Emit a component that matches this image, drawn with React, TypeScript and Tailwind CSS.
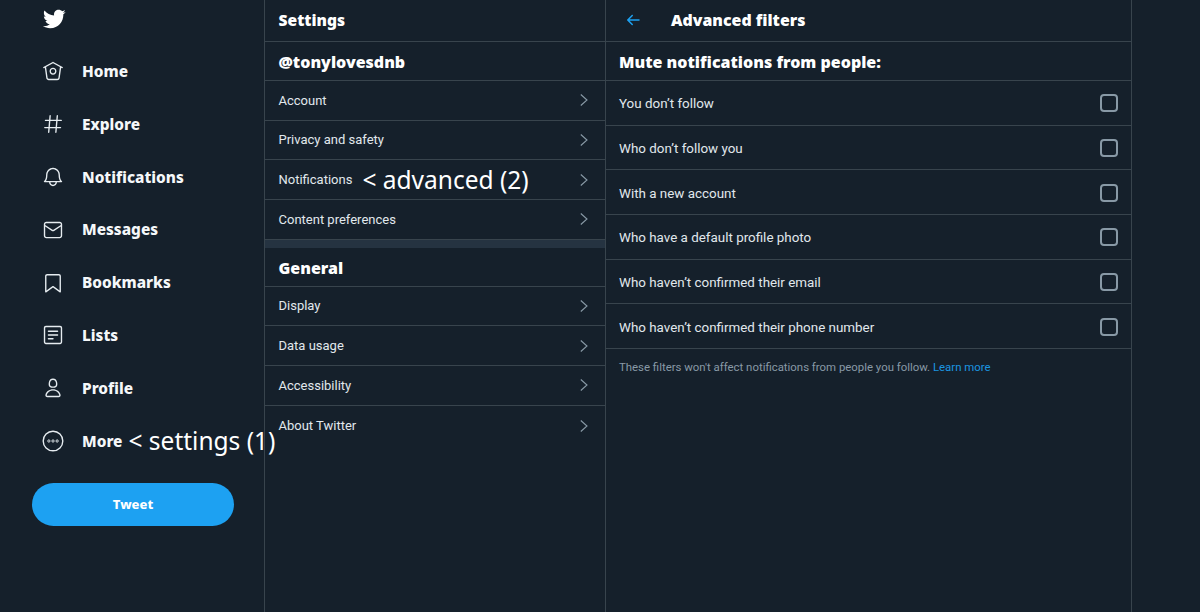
import React from 'react';

const BIRD = 'M23.643 4.937c-.835.37-1.732.62-2.675.733.962-.576 1.7-1.49 2.048-2.578-.9.534-1.897.922-2.958 1.13-.85-.904-2.06-1.47-3.4-1.47-2.572 0-4.658 2.086-4.658 4.66 0 .364.042.718.12 1.06-3.873-.195-7.304-2.05-9.602-4.868-.4.69-.63 1.49-.63 2.342 0 1.616.823 3.043 2.072 3.878-.764-.025-1.482-.234-2.11-.583v.06c0 2.257 1.605 4.14 3.737 4.568-.392.106-.803.162-1.227.162-.3 0-.593-.028-.877-.082.593 1.85 2.313 3.198 4.352 3.234-1.595 1.25-3.604 1.995-5.786 1.995-.376 0-.747-.022-1.112-.065 2.062 1.323 4.51 2.093 7.14 2.093 8.57 0 13.255-7.098 13.255-13.254 0-.2-.005-.402-.014-.602.91-.658 1.7-1.477 2.323-2.41z';

const NAV_ICONS: { [key: string]: React.ReactNode } = {
  Home: (
    <>
      <path d="M22.46 7.57L12.357 2.115c-.223-.12-.49-.12-.713 0L1.543 7.57c-.364.197-.5.652-.303 1.017.135.25.394.393.66.393.12 0 .243-.03.356-.09l.815-.44L4.7 19.963c.214 1.215 1.308 2.062 2.658 2.062h9.282c1.352 0 2.445-.848 2.663-2.087l1.626-11.49.818.442c.364.193.82.06 1.017-.304.196-.363.06-.818-.304-1.015zm-4.638 12.133c-.107.606-.703.822-1.18.822H7.36c-.48 0-1.075-.216-1.178-.798L4.48 7.69 12 3.628l7.522 4.06-1.7 12.015z" />
      <path d="M8.22 12.184c0 2.084 1.695 3.78 3.78 3.78s3.78-1.696 3.78-3.78-1.695-3.78-3.78-3.78-3.78 1.696-3.78 3.78zm6.06 0c0 1.258-1.022 2.28-2.28 2.28s-2.28-1.022-2.28-2.28 1.022-2.28 2.28-2.28 2.28 1.022 2.28 2.28z" />
    </>
  ),
  Explore: (
    <path d="M21 7.337h-3.93l.372-4.272c.036-.412-.27-.775-.682-.812-.417-.03-.776.27-.812.683l-.383 4.4h-6.32l.37-4.27c.037-.413-.27-.776-.68-.813-.42-.03-.777.27-.813.683l-.382 4.4H3.782c-.414 0-.75.337-.75.75s.336.75.75.75H7.61l-.55 6.327H3c-.414 0-.75.336-.75.75s.336.75.75.75h3.93l-.372 4.272c-.036.412.27.775.682.812l.066.003c.385 0 .712-.295.746-.686l.383-4.4h6.32l-.37 4.27c-.036.413.27.776.682.813l.066.003c.385 0 .712-.295.746-.686l.382-4.4h3.957c.413 0 .75-.337.75-.75s-.337-.75-.75-.75H16.39l.55-6.327H21c.414 0 .75-.336.75-.75s-.336-.75-.75-.75zm-6.115 7.826h-6.32l.55-6.326h6.32l-.55 6.326z" />
  ),
  Notifications: (
    <path d="M21.697 16.468c-.02-.016-2.14-1.64-2.103-6.03.02-2.532-.812-4.782-2.347-6.335C15.872 2.71 14.01 1.94 12.005 1.93h-.013c-2.004.01-3.866.78-5.242 2.174-1.534 1.553-2.368 3.802-2.346 6.334.037 4.33-2.02 5.967-2.102 6.03-.26.193-.366.53-.265.838.102.308.39.515.712.515h4.92c.102 2.31 1.997 4.16 4.33 4.16s4.226-1.85 4.327-4.16h4.922c.322 0 .61-.206.71-.514.103-.307-.003-.645-.263-.838zM12 20.478c-1.505 0-2.73-1.177-2.828-2.658h5.656c-.1 1.48-1.323 2.66-2.828 2.66zM4.38 16.32c.74-1.132 1.548-3.028 1.524-5.896-.018-2.16.644-3.982 1.913-5.267C8.91 4.05 10.397 3.437 12 3.43c1.603.008 3.087.62 4.18 1.728 1.27 1.285 1.933 3.106 1.915 5.267-.024 2.868.785 4.765 1.525 5.896H4.38z" />
  ),
  Messages: (
    <path d="M19.25 3.018H4.75C3.233 3.018 2 4.252 2 5.77v12.495c0 1.518 1.233 2.753 2.75 2.753h14.5c1.517 0 2.75-1.235 2.75-2.753V5.77c0-1.518-1.233-2.752-2.75-2.752zm-14.5 1.5h14.5c.69 0 1.25.56 1.25 1.25v.714l-8.05 5.367c-.273.18-.626.182-.9-.002L3.5 6.482v-.714c0-.69.56-1.25 1.25-1.25zm14.5 14.998H4.75c-.69 0-1.25-.56-1.25-1.25V8.24l7.24 4.83c.383.256.822.384 1.26.384.44 0 .877-.128 1.26-.383l7.24-4.83v10.022c0 .69-.56 1.25-1.25 1.25z" />
  ),
  Bookmarks: (
    <path d="M19.9 23.5c-.157 0-.312-.05-.442-.144L12 17.928l-7.458 5.43c-.228.164-.53.19-.78.06-.25-.127-.41-.385-.41-.667V5.6c0-1.24 1.01-2.25 2.25-2.25h12.798c1.24 0 2.25 1.01 2.25 2.25v17.15c0 .282-.158.54-.41.668-.106.055-.223.082-.34.082zM12 16.25c.155 0 .31.048.44.144l6.71 4.883V5.6c0-.412-.337-.75-.75-.75H5.6c-.413 0-.75.338-.75.75v15.677l6.71-4.883c.13-.096.285-.144.44-.144z" />
  ),
  Lists: (
    <>
      <path d="M19.75 22H4.25C3.01 22 2 20.99 2 19.75V4.25C2 3.01 3.01 2 4.25 2h15.5C20.99 2 22 3.01 22 4.25v15.5c0 1.24-1.01 2.25-2.25 2.25zM4.25 3.5c-.414 0-.75.337-.75.75v15.5c0 .413.336.75.75.75h15.5c.414 0 .75-.337.75-.75V4.25c0-.413-.336-.75-.75-.75H4.25z" />
      <path d="M17 8.64H7c-.414 0-.75-.337-.75-.75s.336-.75.75-.75h10c.414 0 .75.336.75.75s-.336.75-.75.75zm0 4.11H7c-.414 0-.75-.336-.75-.75s.336-.75.75-.75h10c.414 0 .75.336.75.75s-.336.75-.75.75zm-5 4.11H7c-.414 0-.75-.335-.75-.75s.336-.75.75-.75h5c.414 0 .75.337.75.75s-.336.75-.75.75z" />
    </>
  ),
  Profile: (
    <path d="M12 11.816c1.355 0 2.872-.15 3.84-1.256.814-.93 1.078-2.368.806-4.392-.38-2.825-2.117-4.512-4.646-4.512S7.734 3.343 7.354 6.17c-.272 2.022-.008 3.46.806 4.39.968 1.107 2.485 1.256 3.84 1.256zM8.84 6.368c.162-1.2.787-3.212 3.16-3.212s2.998 2.013 3.16 3.212c.207 1.55.057 2.627-.45 3.205-.455.52-1.266.743-2.71.743s-2.255-.223-2.71-.743c-.507-.578-.657-1.656-.45-3.205zm11.44 12.868c-.877-3.526-4.282-5.99-8.28-5.99s-7.403 2.464-8.28 5.99c-.172.692-.028 1.4.395 1.94.408.52 1.04.82 1.733.82h12.304c.693 0 1.325-.3 1.733-.82.424-.54.567-1.247.394-1.94zm-1.576 1.016c-.126.16-.316.246-.552.246H5.848c-.235 0-.426-.085-.552-.246-.137-.174-.18-.412-.12-.654.71-2.855 3.517-4.85 6.824-4.85s6.114 1.994 6.824 4.85c.06.242.017.48-.12.654z" />
  ),
  More: (
    <>
      <circle cx="12" cy="12" r="10.7" fill="none" stroke="currentColor" strokeWidth="1.5" />
      <circle cx="7.5" cy="12" r="1.25" fill="none" stroke="currentColor" strokeWidth="1" />
      <circle cx="12" cy="12" r="1.25" fill="none" stroke="currentColor" strokeWidth="1" />
      <circle cx="16.5" cy="12" r="1.25" fill="none" stroke="currentColor" strokeWidth="1" />
    </>
  ),
};

const NAV_ITEMS = ['Home', 'Explore', 'Notifications', 'Messages', 'Bookmarks', 'Lists', 'Profile', 'More'];
const ACCOUNT_ROWS = ['Account', 'Privacy and safety', 'Notifications', 'Content preferences'];
const GENERAL_ROWS = ['Display', 'Data usage', 'Accessibility', 'About Twitter'];
const FILTERS = [
  'You don’t follow',
  'Who don’t follow you',
  'With a new account',
  'Who have a default profile photo',
  'Who haven’t confirmed their email',
  'Who haven’t confirmed their phone number',
];

const Chevron = () => (
  <svg viewBox="0 0 8 12" className="shrink-0 w-[8px] h-[12px] text-[#8899a6]" fill="none" stroke="currentColor" strokeWidth="1.1">
    <path d="M0.8 0.5L7 6L0.8 11.5" />
  </svg>
);

const SettingsRow: React.FC<{ label: string; note?: string; last?: boolean }> = ({ label, note, last }) => (
  <div className={`flex items-center justify-between h-[39.7px] pl-[13.5px] pr-[17px] text-[13px] font-['Roboto',sans-serif] text-[#e1e8ed] ${last ? '' : 'border-b border-[#38444d]'}`}>
    <div className="flex items-center whitespace-nowrap">
      <span>{label}</span>
      {note && <span className="ml-[10px] pt-[2px] text-[24.5px] leading-none text-white font-['Noto_Sans',sans-serif]">{note}</span>}
    </div>
    <Chevron />
  </div>
);

const App: React.FC = () => {
  return (
    <div className="flex w-[1200px] h-[612px] overflow-hidden bg-[#15202b] font-['Noto_Sans','Liberation_Sans',sans-serif] text-white">
      <nav className="w-[264px] shrink-0">
        <div className="h-[44.6px] pl-[42px] pt-[7px]">
          <svg viewBox="0 0 24 24" className="w-[24px] h-[24px]" fill="currentColor">
            <path d={BIRD} />
          </svg>
        </div>
        {NAV_ITEMS.map((item) => (
          <div key={item} className="flex items-center h-[52.85px] pl-[42px] whitespace-nowrap">
            <svg viewBox="0 0 24 24" className="shrink-0 w-[22px] h-[22px] text-[#e6ecf0]" fill="currentColor">
              {NAV_ICONS[item]}
            </svg>
            <span className="ml-[18px] pt-[1px] text-[15.4px] font-extrabold text-[#f5f8fa]">{item}</span>
            {item === 'More' && <span className="ml-[6px] text-[24.5px] leading-none">&lt; settings (1)</span>}
          </div>
        ))}
        <button className="block mt-[16px] ml-[32px] w-[202px] h-[43px] rounded-full bg-[#1da1f2] text-[13px] font-extrabold text-white">
          Tweet
        </button>
      </nav>

      <section className="w-[341px] shrink-0 border-l border-[#38444d]">
        <div className="flex items-center h-[42px] pl-[13.5px] border-b border-[#38444d] text-[15.6px] font-black">Settings</div>
        <div className="flex items-center h-[39px] pl-[13.5px] pt-[1px] border-b border-[#38444d] text-[16px] font-black">@tonylovesdnb</div>
        {ACCOUNT_ROWS.map((row) => (
          <SettingsRow key={row} label={row} note={row === 'Notifications' ? '< advanced (2)' : undefined} />
        ))}
        <div className="h-[8px] bg-[#253341]" />
        <div className="flex items-center h-[39px] pl-[13.5px] pt-[2px] border-b border-[#38444d] text-[16px] font-black">General</div>
        {GENERAL_ROWS.map((row, i) => (
          <SettingsRow key={row} label={row} last={i === GENERAL_ROWS.length - 1} />
        ))}
      </section>

      <section className="w-[527px] shrink-0 border-x border-[#38444d]">
        <div className="flex items-center h-[42px] pl-[18px] border-b border-[#38444d]">
          <svg viewBox="0 0 24 24" className="w-[18px] h-[18px] -mt-[2px] text-[#1da1f2]" fill="currentColor">
            <path d="M20 11H7.414l4.293-4.293c.39-.39.39-1.023 0-1.414s-1.023-.39-1.414 0l-6 6c-.39.39-.39 1.023 0 1.414l6 6c.195.195.45.293.707.293s.512-.098.707-.293c.39-.39.39-1.023 0-1.414L7.414 13H20c.553 0 1-.447 1-1s-.447-1-1-1z" />
          </svg>
          <span className="ml-[29px] text-[15.9px] font-black">Advanced filters</span>
        </div>
        <div className="flex items-center h-[39px] pl-[13px] pt-[1px] border-b border-[#38444d] text-[16px] font-black">
          Mute notifications from people:
        </div>
        {FILTERS.map((row) => (
          <div key={row} className="flex items-center justify-between h-[44.7px] pl-[13px] pr-[13px] pt-[1px] border-b border-[#38444d] text-[13.4px] font-['Roboto',sans-serif] text-[#e1e8ed]">
            <span className="pt-[2px]">{row}</span>
            <span className="w-[18px] h-[18px] rounded-[4px] border-2 border-[#8899a6]" />
          </div>
        ))}
        <p className="pl-[13px] pt-[10px] text-[11.4px] font-['Roboto',sans-serif] text-[#8899a6]">
          These filters won't affect notifications from people you follow. <span className="text-[#1b95e0]">Learn more</span>
        </p>
      </section>
    </div>
  );
};

export default App;
